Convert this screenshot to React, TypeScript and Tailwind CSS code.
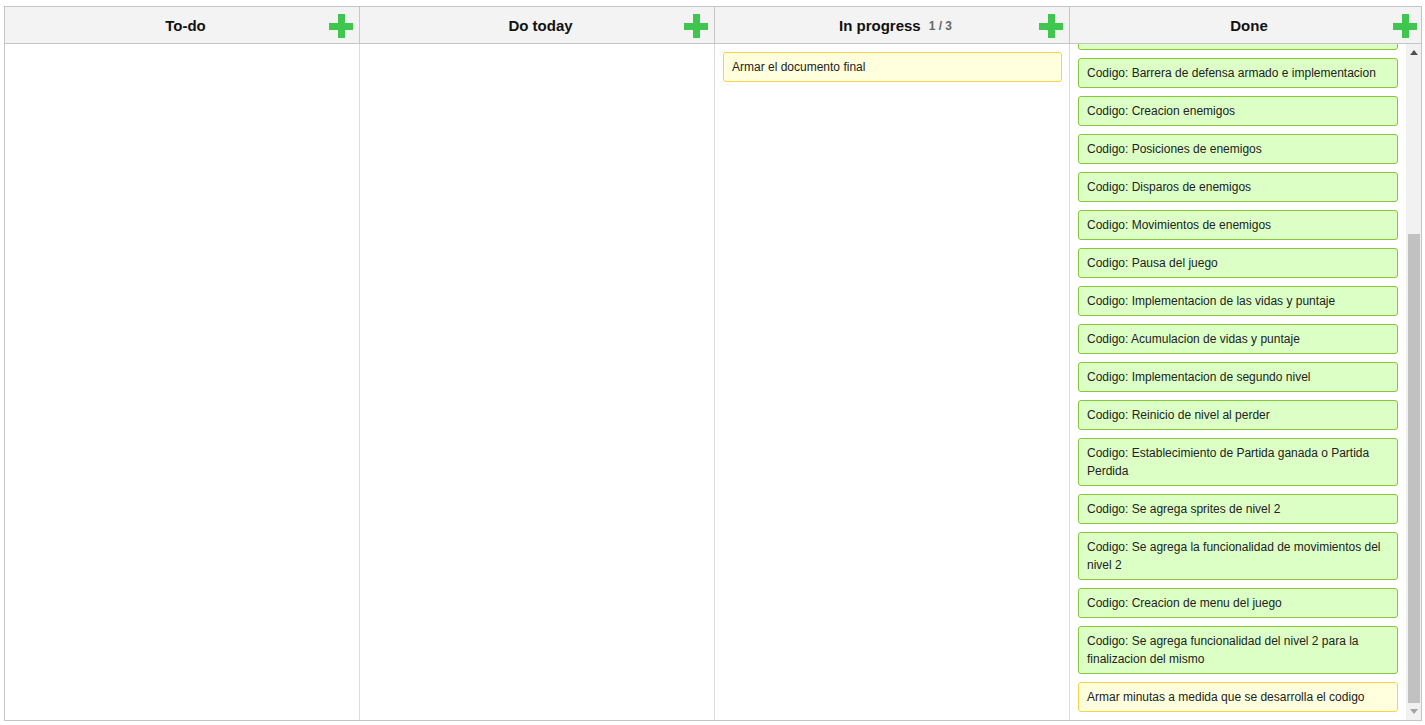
import { useLayoutEffect, useRef } from 'react';

type Card = { text: string; tone: 'green' | 'yellow' };

const doneCards: Card[] = [
  { text: 'Codigo: Creacion del proyecto', tone: 'green' },
  { text: 'Codigo: Importacion de sprites', tone: 'green' },
  { text: 'Codigo: Creacion de la nave del jugador', tone: 'green' },
  { text: 'Codigo: Movimiento de la nave', tone: 'green' },
  { text: 'Codigo: Disparos de la nave', tone: 'green' },
  { text: 'Codigo: Colisiones de disparos', tone: 'green' },
  { text: 'Codigo: Barrera de defensa', tone: 'green' },
  { text: 'Codigo: Barrera de defensa armado e implementacion', tone: 'green' },
  { text: 'Codigo: Creacion enemigos', tone: 'green' },
  { text: 'Codigo: Posiciones de enemigos', tone: 'green' },
  { text: 'Codigo: Disparos de enemigos', tone: 'green' },
  { text: 'Codigo: Movimientos de enemigos', tone: 'green' },
  { text: 'Codigo: Pausa del juego', tone: 'green' },
  { text: 'Codigo: Implementacion de las vidas y puntaje', tone: 'green' },
  { text: 'Codigo: Acumulacion de vidas y puntaje', tone: 'green' },
  { text: 'Codigo: Implementacion de segundo nivel', tone: 'green' },
  { text: 'Codigo: Reinicio de nivel al perder', tone: 'green' },
  { text: 'Codigo: Establecimiento de Partida ganada o Partida Perdida', tone: 'green' },
  { text: 'Codigo: Se agrega sprites de nivel 2', tone: 'green' },
  { text: 'Codigo: Se agrega la funcionalidad de movimientos del nivel 2', tone: 'green' },
  { text: 'Codigo: Creacion de menu del juego', tone: 'green' },
  { text: 'Codigo: Se agrega funcionalidad del nivel 2 para la finalizacion del mismo', tone: 'green' },
  { text: 'Armar minutas a medida que se desarrolla el codigo', tone: 'yellow' },
];

function PlusIcon() {
  return (
    <svg width="24" height="24" viewBox="0 0 24 24" className="block">
      <rect x="9" y="0" width="7" height="24" fill="#3fc64f" />
      <rect x="0" y="9" width="24" height="7" fill="#3fc64f" />
    </svg>
  );
}

function TaskCard({ card }: { card: Card }) {
  return (
    <div
      className={
        card.tone === 'green'
          ? 'rounded-[3px] border border-[#86c53c] bg-[#dcffc6] px-2 py-[5px] text-[12px] leading-[18px] text-[#222]'
          : 'rounded-[3px] border border-[#f6d44a] bg-[#ffffdd] px-2 py-[5px] text-[12px] leading-[18px] text-[#222]'
      }
    >
      {card.text}
    </div>
  );
}

function Header({ title, count, last }: { title: string; count?: string; last?: boolean }) {
  return (
    <div
      className={`relative flex h-[36px] items-center justify-center bg-[#f3f3f3] pl-[7px] pt-[2px] ${
        last ? '' : 'border-r border-[#c8c8c8]'
      }`}
    >
      <span className="text-[15px] font-bold text-[#111]">{title}</span>
      {count && <span className="ml-[8px] text-[12px] font-bold text-[#666]">{count}</span>}
      <div className={`absolute top-[7px] ${last ? 'right-[4px]' : 'right-[6px]'}`}>
        <PlusIcon />
      </div>
    </div>
  );
}

// classic scrollbar look, drawn because the headless browser hides overlay scrollbars
function ScrollTrack() {
  return (
    <div className="flex h-full w-[15px] shrink-0 flex-col bg-[#f1f1f1]">
      <div className="flex h-[17px] items-center justify-center">
        <svg width="8" height="5" viewBox="0 0 8 5">
          <polygon points="0,5 4,0 8,5" fill="#505050" />
        </svg>
      </div>
      <div className="ml-[2px] mr-[1px] mt-[173px] h-[469px] bg-[#c1c1c1]" />
      <div className="flex flex-1 items-center justify-center">
        <svg width="8" height="5" viewBox="0 0 8 5">
          <polygon points="0,0 8,0 4,5" fill="#a3a3a3" />
        </svg>
      </div>
    </div>
  );
}

export default function App() {
  const doneRef = useRef<HTMLDivElement>(null);

  useLayoutEffect(() => {
    if (doneRef.current) doneRef.current.scrollTop = doneRef.current.scrollHeight;
  }, []);

  return (
    <div className="h-[725px] w-[1425px] bg-white pl-[4px] pt-[6px] font-['Liberation_Sans',Arial,sans-serif]">
      <div className="flex h-[715px] w-[1418px] flex-col border border-[#c4c4c4]">
        {/* column headers */}
        <div className="grid grid-cols-[355px_355px_355px_1fr] border-b border-[#c4c4c4]">
          <Header title="To-do" />
          <Header title="Do today" />
          <Header title="In progress" count="1 / 3" />
          <Header title="Done" last />
        </div>

        {/* column bodies */}
        <div className="grid min-h-0 flex-1 grid-cols-[355px_355px_355px_1fr]">
          <div className="border-r border-[#dddddd]" />
          <div className="border-r border-[#dddddd]" />
          <div className="border-r border-[#dddddd] py-2 pl-2 pr-[7px]">
            <TaskCard card={{ text: 'Armar el documento final', tone: 'yellow' }} />
          </div>
          <div className="flex h-full min-h-0">
            <div ref={doneRef} className="h-full min-w-0 flex-1 overflow-hidden">
              <div className="flex flex-col gap-2 px-2 py-2">
                {doneCards.map((c, i) => (
                  <TaskCard key={i} card={c} />
                ))}
              </div>
            </div>
            <ScrollTrack />
          </div>
        </div>
      </div>
    </div>
  );
}
